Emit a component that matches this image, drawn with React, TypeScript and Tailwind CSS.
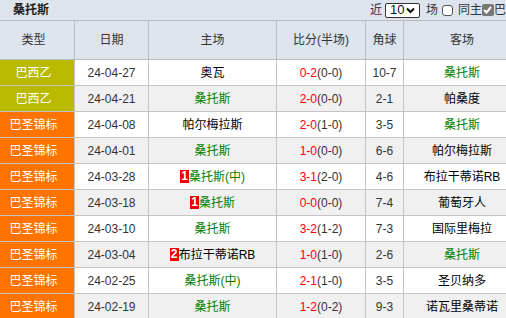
import React from "react";

type Row = {
  type: string;
  league: "b" | "o";
  date: string;
  home: string;
  homeGreen: boolean;
  badge?: string;
  score: string;
  half: string;
  corner: string;
  away: string;
  awayGreen: boolean;
};

const rows: Row[] = [
  { type: "巴西乙", league: "b", date: "24-04-27", home: "奥瓦", homeGreen: false, score: "0-2", half: "(0-0)", corner: "10-7", away: "桑托斯", awayGreen: true },
  { type: "巴西乙", league: "b", date: "24-04-21", home: "桑托斯", homeGreen: true, score: "2-0", half: "(0-0)", corner: "2-1", away: "帕桑度", awayGreen: false },
  { type: "巴圣锦标", league: "o", date: "24-04-08", home: "帕尔梅拉斯", homeGreen: false, score: "2-0", half: "(1-0)", corner: "3-5", away: "桑托斯", awayGreen: true },
  { type: "巴圣锦标", league: "o", date: "24-04-01", home: "桑托斯", homeGreen: true, score: "1-0", half: "(0-0)", corner: "6-6", away: "帕尔梅拉斯", awayGreen: false },
  { type: "巴圣锦标", league: "o", date: "24-03-28", home: "桑托斯(中)", homeGreen: true, badge: "1", score: "3-1", half: "(2-0)", corner: "4-6", away: "布拉干蒂诺RB", awayGreen: false },
  { type: "巴圣锦标", league: "o", date: "24-03-18", home: "桑托斯", homeGreen: true, badge: "1", score: "0-0", half: "(0-0)", corner: "7-4", away: "葡萄牙人", awayGreen: false },
  { type: "巴圣锦标", league: "o", date: "24-03-10", home: "桑托斯", homeGreen: true, score: "3-2", half: "(1-2)", corner: "7-3", away: "国际里梅拉", awayGreen: false },
  { type: "巴圣锦标", league: "o", date: "24-03-04", home: "布拉干蒂诺RB", homeGreen: false, badge: "2", score: "1-0", half: "(1-0)", corner: "2-6", away: "桑托斯", awayGreen: true },
  { type: "巴圣锦标", league: "o", date: "24-02-25", home: "桑托斯(中)", homeGreen: true, score: "2-1", half: "(1-0)", corner: "3-5", away: "圣贝纳多", awayGreen: false },
  { type: "巴圣锦标", league: "o", date: "24-02-19", home: "桑托斯", homeGreen: true, score: "1-2", half: "(0-2)", corner: "9-3", away: "诺瓦里桑蒂诺", awayGreen: false },
];

const font = { fontFamily: '"Liberation Sans", "Noto Sans CJK SC", sans-serif' };

export default function App() {
  return (
    <div className="w-[506px] h-[318px] overflow-hidden bg-white text-[12px] leading-[14px] text-black" style={font}>
      <div className="h-[20px] bg-[#dde4ed] flex items-center justify-between pl-[13px] whitespace-nowrap">
        <span className="font-bold text-[#222]">桑托斯</span>
        <div className="flex items-center text-[#333]">
          <span>近</span>
          <div className="ml-[3px] w-[35px] h-[15px] bg-white border border-[#333] rounded-[2px] flex items-center pl-[4px] text-[#111]">
            <span className="text-[13px]">10</span>
            <svg width="9" height="7" viewBox="0 0 9 7" className="ml-[2px]">
              <path d="M1 1.5 L4.5 5 L8 1.5" stroke="#111" strokeWidth="2" fill="none" />
            </svg>
          </div>
          <span className="ml-[6px]">场</span>
          <div className="ml-[4px] w-[11px] h-[11px] bg-white border border-[#555] rounded-[3px]"></div>
          <span className="ml-[5px]">同主</span>
          <div className="w-[12px] h-[12px] bg-[#777] rounded-[2px] flex items-center justify-center">
            <svg width="9" height="8" viewBox="0 0 9 8">
              <path d="M1 4 L3.5 6.5 L8 1" stroke="#fff" strokeWidth="2" fill="none" />
            </svg>
          </div>
          <span>巴</span>
        </div>
      </div>
      <div className="w-[520px]">
        <div className="flex h-[40px] border-y border-[#bbb] bg-[#dde4ed] text-[#333]">
          <div className="w-[75px] border-r border-[#bbb] flex items-center justify-center pr-[7px]">类型</div>
          <div className="w-[74px] border-r border-[#bbb] flex items-center justify-center">日期</div>
          <div className="w-[128px] border-r border-[#bbb] flex items-center justify-center">主场</div>
          <div className="w-[89px] border-r border-[#bbb] flex items-center justify-center">比分(半场)</div>
          <div className="w-[38px] border-r border-[#bbb] flex items-center justify-center">角球</div>
          <div className="w-[116px] flex items-center justify-center">客场</div>
        </div>
        {rows.map((r, i) => (
          <div key={i} className={`flex h-[26px] border-b border-[#c4c4c4] whitespace-nowrap ${i % 2 === 1 ? "bg-[#f0f0f0]" : "bg-white"}`}>
            <div className={`w-[75px] border-r border-[#c4c4c4] flex items-center justify-center pr-[7px] text-white ${r.league === "b" ? "bg-[#b9b900]" : "bg-[#ff7300]"}`}>{r.type}</div>
            <div className="w-[74px] border-r border-[#c4c4c4] flex items-center justify-center text-[#333]">{r.date}</div>
            <div className="w-[128px] border-r border-[#c4c4c4] flex items-center justify-center">
              {r.badge && (
                <span className="bg-[#ee0000] text-white font-bold w-[9px] h-[13px] leading-[13px] flex items-center justify-center text-[12px]">{r.badge}</span>
              )}
              <span className={r.homeGreen ? "text-[#008000]" : "text-black"}>{r.home}</span>
            </div>
            <div className="w-[89px] border-r border-[#c4c4c4] flex items-center justify-center">
              <span className="text-[#ff0000]">{r.score}</span>
              <span className="text-[#333]">{r.half}</span>
            </div>
            <div className="w-[38px] border-r border-[#c4c4c4] flex items-center justify-center text-[#333]">{r.corner}</div>
            <div className={`w-[116px] flex items-center justify-center ${r.awayGreen ? "text-[#008000]" : "text-black"}`}>{r.away}</div>
          </div>
        ))}
      </div>
    </div>
  );
}
